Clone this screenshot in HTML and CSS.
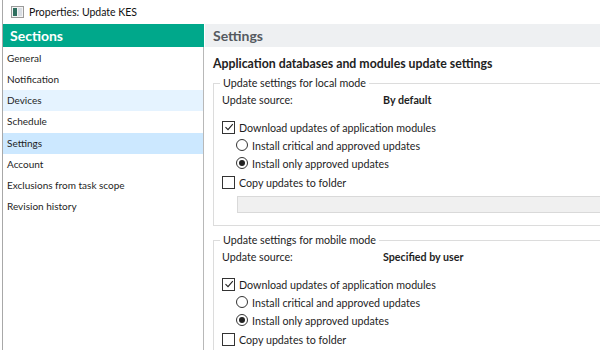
FILE: index.html
```html
<!DOCTYPE html>
<html lang="en">
  <head>
    <meta charset="UTF-8" />
    <title>Properties: Update KES</title>
    <link rel="stylesheet" href="styles.css">
  </head>
  <body>
    <div class="window">
      <div class="titlebar">
        <svg class="app-icon" width="13" height="12" viewBox="0 0 13 12">
          <rect x="0.5" y="0.5" width="12" height="11" fill="#f4f4f4" stroke="#9a9a9a"/>
          <rect x="2" y="2" width="4" height="8" fill="#2f6f5f"/>
          <rect x="7" y="2" width="4" height="8" fill="#d8dde3"/>
        </svg>
        <span>Properties: Update KES</span>
      </div>

      <div class="content">
        <div class="sidebar">
          <div class="sidebar-head">Sections</div>
          <ul class="sections">
            <li>General</li>
            <li>Notification</li>
            <li class="hover">Devices</li>
            <li>Schedule</li>
            <li class="active">Settings</li>
            <li>Account</li>
            <li>Exclusions from task scope</li>
            <li>Revision history</li>
          </ul>
        </div>

        <div class="main">
          <div class="main-head">Settings</div>
          <div class="main-body">
            <h3>Application databases and modules update settings</h3>

            <fieldset class="group">
              <legend>Update settings for local mode</legend>
              <div class="row source">
                <span class="label">Update source:</span>
                <span class="value">By default</span>
              </div>
              <div class="row option first">
                <span class="box checked"><svg width="10" height="10" viewBox="0 0 10 10"><path d="M1.5 5.2 L4 7.6 L8.8 2.2" fill="none" stroke="#222" stroke-width="1.1"/></svg></span>
                Download updates of application modules
              </div>
              <div class="row option sub">
                <span class="radio"></span>
                Install critical and approved updates
              </div>
              <div class="row option sub">
                <span class="radio on"></span>
                Install only approved updates
              </div>
              <div class="row option copy">
                <span class="box"></span>
                Copy updates to folder
              </div>
              <div class="folder"></div>
            </fieldset>

            <fieldset class="group second">
              <legend>Update settings for mobile mode</legend>
              <div class="row source">
                <span class="label">Update source:</span>
                <span class="value">Specified by user</span>
              </div>
              <div class="row option first">
                <span class="box checked"><svg width="10" height="10" viewBox="0 0 10 10"><path d="M1.5 5.2 L4 7.6 L8.8 2.2" fill="none" stroke="#222" stroke-width="1.1"/></svg></span>
                Download updates of application modules
              </div>
              <div class="row option sub">
                <span class="radio"></span>
                Install critical and approved updates
              </div>
              <div class="row option sub">
                <span class="radio on"></span>
                Install only approved updates
              </div>
              <div class="row option copy">
                <span class="box"></span>
                Copy updates to folder
              </div>
              <div class="folder"></div>
            </fieldset>
          </div>
        </div>
      </div>
    </div>
  </body>
</html>
```

FILE: styles.css
```css
body {
  margin: 0;
  background-color: #ffffff;
  font-family: Lato, "Noto Sans", sans-serif;
  font-size: 10.7px;
  color: #1e1e1e;
  overflow: hidden;
}
.window {
  height: 350px;
  margin-left: 2px;
  border-left: 1px solid #a8a8a8;
  display: flex;
  flex-direction: column;
}
.titlebar {
  height: 24px;
  display: flex;
  align-items: center;
  gap: 5px;
  padding-left: 8px;
  font-size: 10.5px;
  color: #111;
}
.content {
  flex: 1;
  display: flex;
  min-height: 0;
}
.sidebar {
  width: 201px;
  display: flex;
  flex-direction: column;
}
.sidebar-head {
  height: 23px;
  background-color: #00a88b;
  color: white;
  font-weight: bold;
  font-size: 14px;
  line-height: 23px;
  padding-left: 7px;
}
.sections {
  list-style: none;
  margin: 0;
  padding: 1px 0 0 0;
  flex: 1;
  border-right: 1px solid #b8b8b8;
}
.sections li {
  height: 21.15px;
  line-height: 21px;
  padding-left: 4px;
  font-size: 10px;
}
.sections li.hover {
  background-color: #e5f3ff;
}
.sections li.active {
  background-color: #cce8ff;
}
.main {
  flex: 1;
  display: flex;
  flex-direction: column;
  margin-left: 1px;
  min-width: 0;
  overflow: hidden;
}
.main-head {
  height: 23px;
  background-color: #eef0f2;
  color: #555a60;
  font-weight: bold;
  font-size: 14px;
  line-height: 23px;
  padding-left: 8px;
}
.main-body {
  padding: 8px 0 0 8px;
}
.main-body h3 {
  margin: 0 0 2px 0;
  height: 18px;
  line-height: 18px;
  font-size: 12.3px;
  font-weight: bold;
  color: #222;
}
.group {
  margin: 0;
  padding: 0 0 12px 8px;
  border: 1px solid #dcdcdc;
  border-right: none;
}
.group.second {
  margin-top: 6px;
}
.group legend {
  padding: 0 3px;
  margin-left: -2px;
  line-height: 16px;
  color: #222;
}
.row {
  display: flex;
  align-items: center;
  height: 18px;
}
.row.source {
  height: 16px;
}
.row.source .label {
  width: 161px;
}
.row.source .value {
  font-weight: bold;
}
.row.first {
  margin-top: 11px;
}
.row.copy {
  margin-top: 1px;
}
.row.sub {
  padding-left: 14px;
}
.box {
  width: 11px;
  height: 11px;
  border: 1px solid #333;
  margin-right: 4px;
  display: flex;
  align-items: center;
  justify-content: center;
  background: white;
}
.radio {
  width: 10px;
  height: 10px;
  border: 1px solid #333;
  border-radius: 50%;
  margin-right: 4px;
  display: flex;
  align-items: center;
  justify-content: center;
}
.radio.on::after {
  content: "";
  width: 6px;
  height: 6px;
  border-radius: 50%;
  background: #222;
}
.folder {
  margin: 5px 0 0 15px;
  height: 15px;
  background-color: #f0f0f0;
  border: 1px solid #d9d9d9;
  border-right: none;
}
```
